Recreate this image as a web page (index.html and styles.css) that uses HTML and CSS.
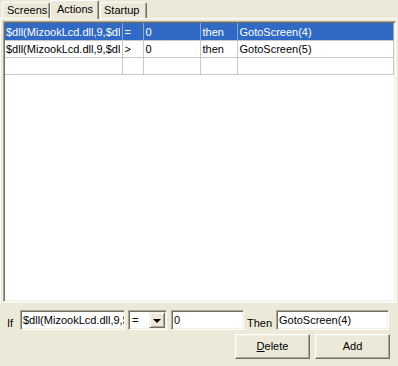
FILE: index.html
```html
<!DOCTYPE html>
<html lang="en">
<head>
  <meta charset="UTF-8" />
  <title>Actions</title>
  <link rel="stylesheet" href="styles.css">
</head>
<body>
  <div class="tabs">
    <div class="tab tab-screens">Screens</div>
    <div class="tab tab-actions active">Actions</div>
    <div class="tab tab-startup">Startup</div>
  </div>

  <div class="panel">
    <div class="list">
      <table class="grid">
        <colgroup>
          <col class="c1"><col class="c2"><col class="c3"><col class="c4"><col>
        </colgroup>
        <tr class="selected">
          <td class="first"><div class="clip">$dll(MizookLcd.dll,9,$dll(</div></td>
          <td>=</td>
          <td>0</td>
          <td>then</td>
          <td>GotoScreen(4)</td>
        </tr>
        <tr>
          <td class="first"><div class="clip">$dll(MizookLcd.dll,9,$dll(</div></td>
          <td>&gt;</td>
          <td>0</td>
          <td>then</td>
          <td>GotoScreen(5)</td>
        </tr>
        <tr>
          <td class="first"></td>
          <td></td>
          <td></td>
          <td></td>
          <td></td>
        </tr>
      </table>
    </div>
  </div>

  <div class="editor">
    <span class="lbl lbl-if">If</span>
    <div class="field f-cond">$dll(MizookLcd.dll,9,$</div>
    <div class="combo">
      <span class="combo-value">=</span>
      <span class="combo-btn"><span class="arrow"></span></span>
    </div>
    <div class="field f-value">0</div>
    <span class="lbl lbl-then">Then</span>
    <div class="field f-action">GotoScreen(4)</div>
  </div>

  <div class="buttons">
    <div class="btn"><u>D</u>elete</div>
    <div class="btn">Add</div>
  </div>
</body>
</html>
```

FILE: styles.css
```css
* {
  box-sizing: border-box;
}
body {
  margin: 0;
  width: 398px;
  height: 366px;
  overflow: hidden;
  background: #ece9d8;
  font-family: 'Liberation Sans', Arial, sans-serif;
  font-size: 11px;
  color: #000;
}

/* tab strip */
.tabs {
  display: flex;
  align-items: flex-end;
  height: 18px;
  padding-left: 2px;
  position: relative;
  z-index: 1;
}
.tab {
  height: 16px;
  line-height: 14px;
  padding-left: 4px;
  border-top: 1px solid #fff;
  border-left: 1px solid #fff;
  border-right: 1px solid #716f64;
  border-radius: 2px 2px 0 0;
  box-shadow: inset -1px 0 #aca899;
  white-space: nowrap;
}
.tab-screens {
  width: 48px;
}
.tab-actions {
  width: 49px;
  padding-left: 6px;
}
.tab-startup {
  width: 47px;
  margin-left: 1px;
  padding-left: 3px;
}
.tab.active {
  height: 19px;
  line-height: 16px;
  margin-bottom: -1px;
  background: #ece9d8;
}

/* tab page */
.panel {
  width: 397px;
  height: 285px;
  padding: 2px 0 0 2px;
  border-top: 1px solid #fff;
  border-left: 1px solid #fff;
  border-right: 1px dotted #fff;
  border-bottom: 1px dotted #fff;
}
.list {
  width: 393px;
  height: 281px;
  background: #fff;
  border: 1px solid;
  border-color: #aca899 #fff #fff #aca899;
  box-shadow: inset 1px 1px #716f64, inset -1px -1px #f1efe2;
  padding: 1px;
  overflow: hidden;
}
.grid {
  width: 100%;
  table-layout: fixed;
  border-collapse: collapse;
}
.grid .c1 { width: 117px; }
.grid .c2 { width: 21px; }
.grid .c3 { width: 57px; }
.grid .c4 { width: 37px; }
.grid td {
  height: 17px;
  padding: 0 2px;
  line-height: 16px;
  white-space: nowrap;
  overflow: hidden;
  border-right: 1px solid #c8c8c8;
  border-bottom: 1px solid #c8c8c8;
  vertical-align: top;
}
.grid tr:first-child td {
  border-top: 1px solid #c8c8c8;
}
.grid td.first {
  padding-left: 1px;
}
.clip {
  overflow: hidden;
  white-space: nowrap;
}
.grid tr.selected td {
  background: #316ac5;
  color: #fff;
  border-top-color: #316ac5;
  border-right-color: #8aa6d6;
}

/* edit row */
.editor {
  display: flex;
  align-items: flex-start;
  height: 20px;
  margin-top: 7px;
}
.lbl {
  padding-top: 6px;
  line-height: 14px;
}
.lbl-if {
  width: 13px;
  margin-left: 7px;
}
.lbl-then {
  width: 29px;
  margin-left: 3px;
}
.field,
.combo {
  height: 20px;
  background: #fff;
  border: 1px solid;
  border-color: #aca899 #fff #fff #aca899;
  box-shadow: inset 1px 1px #716f64, inset -1px -1px #f1efe2;
  padding: 2px 3px 0 2px;
  line-height: 15px;
  white-space: nowrap;
  overflow: hidden;
}
.f-cond {
  width: 105px;
}
.f-value {
  width: 73px;
  margin-left: 4px;
}
.f-action {
  width: 113px;
}
.combo {
  width: 39px;
  margin-left: 3px;
  display: flex;
  align-items: center;
  padding: 1px 1px 1px 3px;
}
.combo-value {
  flex: 1;
  line-height: 14px;
}
.combo-btn {
  width: 16px;
  height: 16px;
  background: #ece9d8;
  border: 1px solid;
  border-color: #f1efe2 #716f64 #716f64 #f1efe2;
  box-shadow: inset 1px 1px #fff, inset -1px -1px #aca899;
  display: flex;
  align-items: center;
  justify-content: center;
}
.arrow {
  width: 0;
  height: 0;
  border-left: 4px solid transparent;
  border-right: 4px solid transparent;
  border-top: 4px solid #000;
  margin-top: 1px;
}

/* buttons */
.buttons {
  display: flex;
  justify-content: flex-end;
  gap: 5px;
  margin-top: 4px;
  padding-right: 8px;
}
.btn {
  width: 75px;
  height: 25px;
  line-height: 23px;
  text-align: center;
  border: 1px solid;
  border-color: #fff #716f64 #716f64 #fff;
  box-shadow: inset -1px -1px #aca899, inset 1px 1px #f1efe2;
}
```
